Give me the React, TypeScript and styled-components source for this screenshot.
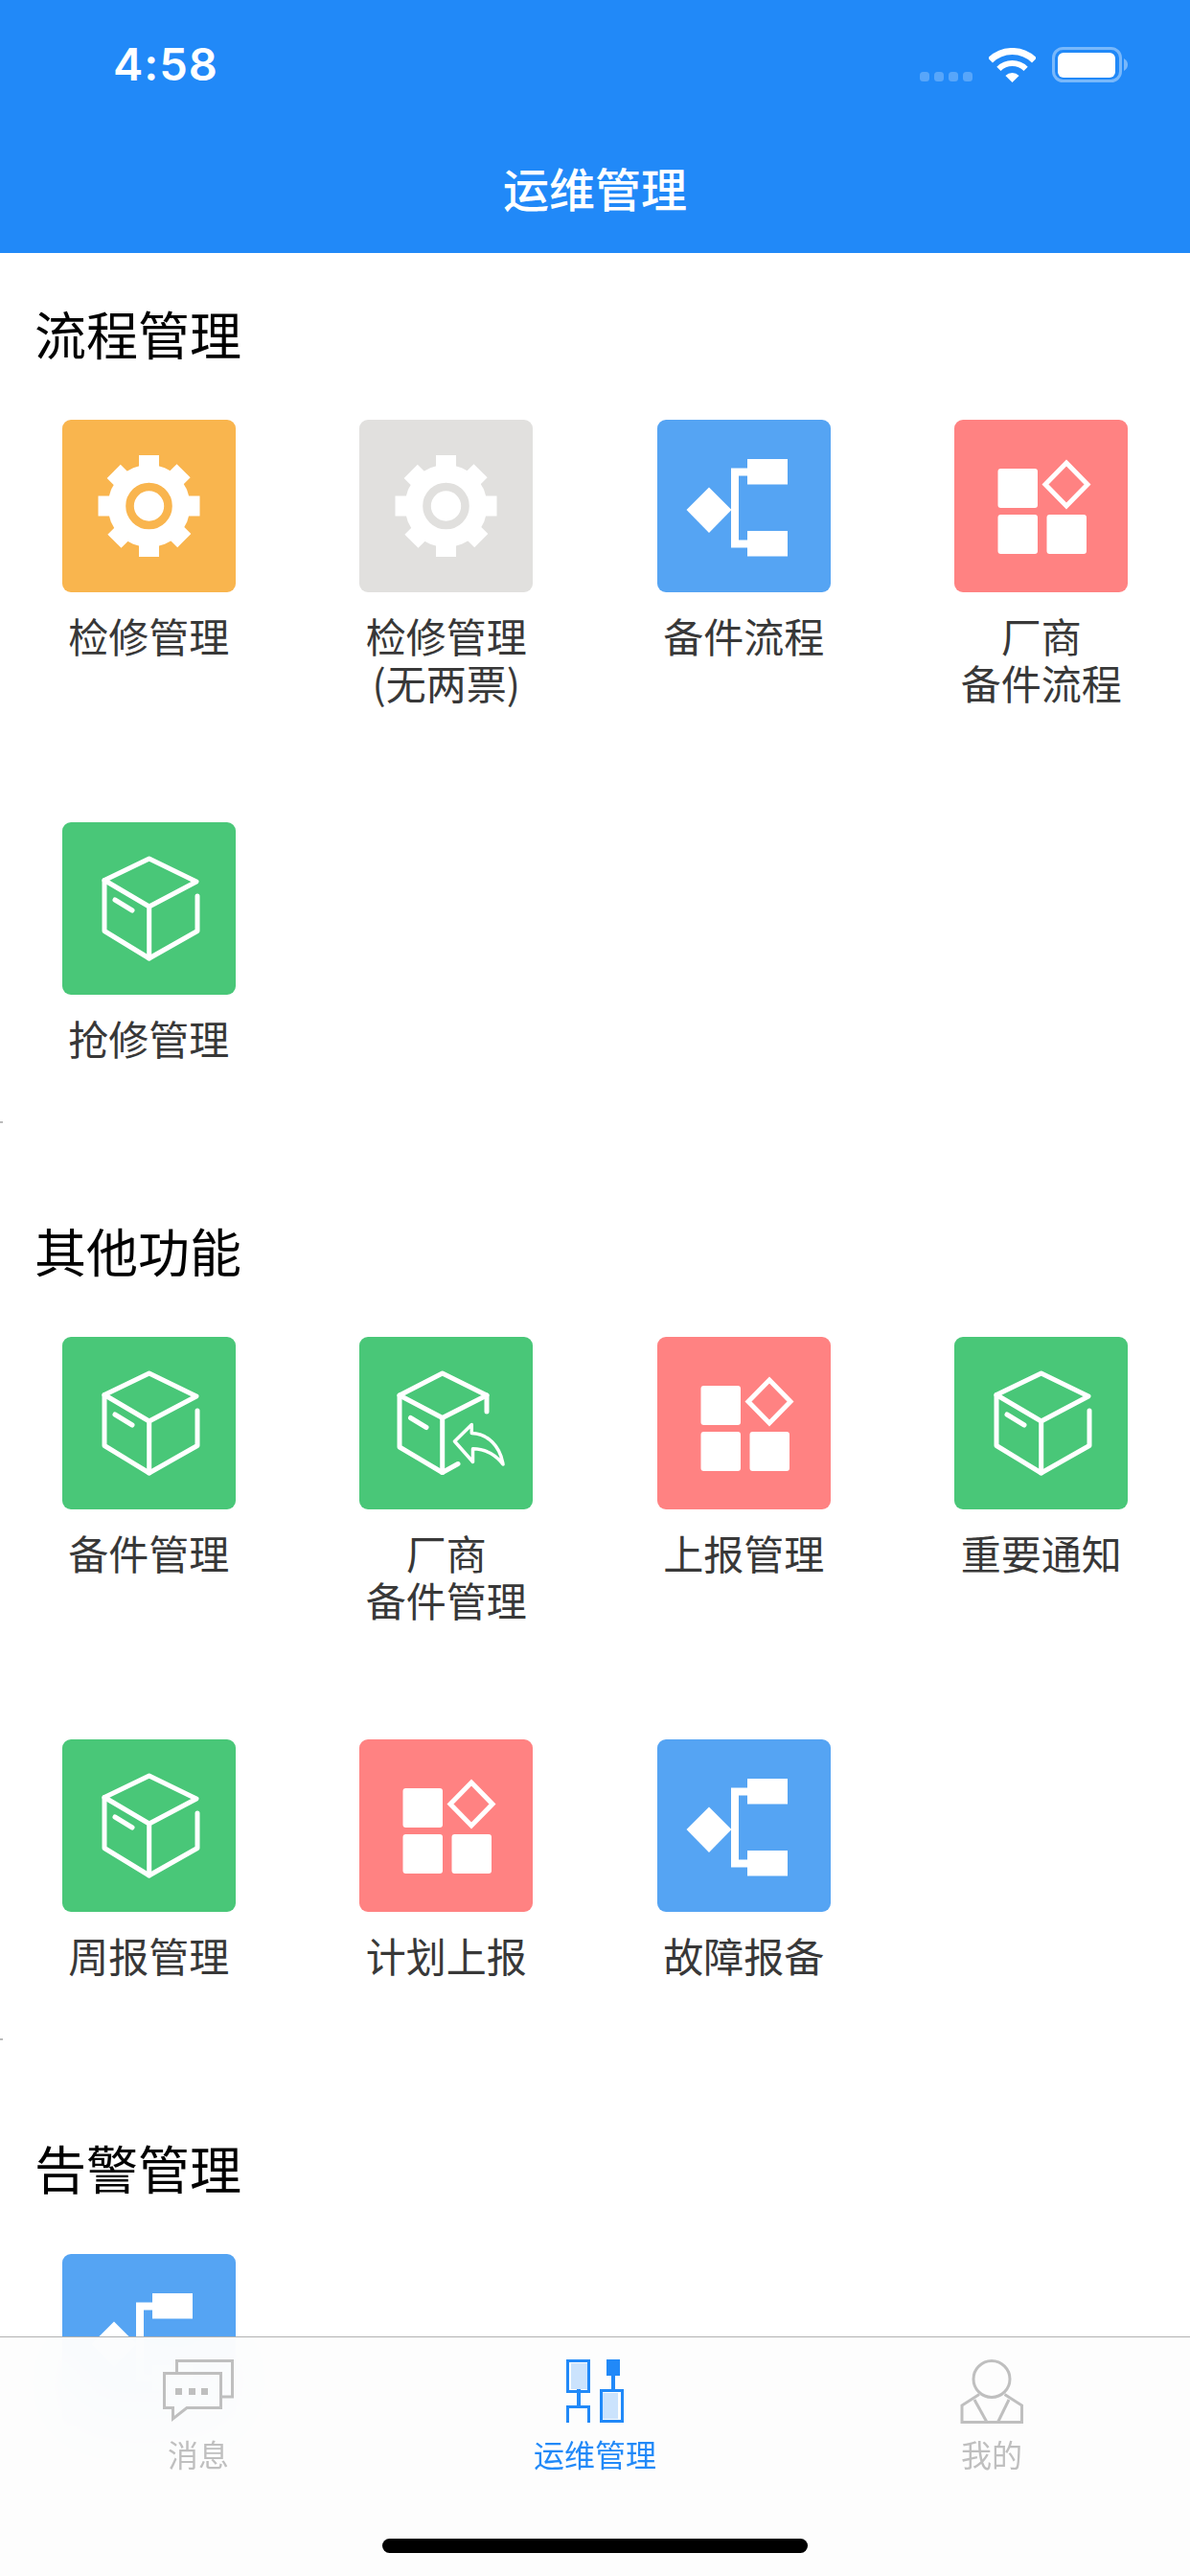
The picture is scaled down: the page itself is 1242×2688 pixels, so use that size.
import React from "react";
import styled, { createGlobalStyle } from "styled-components";

const FONT = `"Noto Sans CJK SC", "Noto Sans", sans-serif`;

const GlobalStyle = createGlobalStyle`
  html, body { margin: 0; padding: 0; background: #fff; }
  * { box-sizing: border-box; }
`;

const Page = styled.div`
  width: 1242px;
  height: 2688px;
  overflow: hidden;
  position: relative;
  background: #fff;
  font-family: ${FONT};
`;

const Header = styled.header`
  height: 264px;
  background: #2189f8;
  color: #fff;
  display: flex;
  flex-direction: column;
`;

const StatusBar = styled.div`
  height: 165px;
  padding: 39px 65px 0 118px;
  display: flex;
  justify-content: space-between;
  align-items: flex-start;
`;

const Clock = styled.span`
  font-family: Inter, "Liberation Sans", sans-serif;
  font-weight: 600;
  font-size: 47px;
  line-height: 56px;
  letter-spacing: 1px;
`;

const StatusIcons = styled.div`
  margin-top: 10px;
  display: flex;
  align-items: flex-end;
  gap: 17px;
`;

const SignalDots = styled.div`
  display: flex;
  gap: 5px;
  margin-bottom: 1px;
`;

const SignalDot = styled.span`
  width: 10px;
  height: 10px;
  border-radius: 3.5px;
  background: rgba(255, 255, 255, 0.25);
`;

const HeaderTitle = styled.h1`
  margin: 0;
  height: 66px;
  text-align: center;
  font-size: 48px;
  font-weight: 500;
  line-height: 60px;
`;

const Content = styled.main`
  padding-top: 57px;
`;

const SectionTitle = styled.h2`
  margin: 0 0 57px;
  padding-left: 36px;
  height: 60px;
  font-size: 54px;
  line-height: 54px;
  font-weight: 400;
  color: #000;
`;

const Grid = styled.div`
  position: relative;
  display: grid;
  grid-template-columns: repeat(4, 1fr);
  grid-auto-rows: 420px;
`;

const DividerStub = styled.span`
  position: absolute;
  left: 0;
  bottom: 106px;
  width: 3px;
  height: 2px;
  background: #bbb;
`;

const Cell = styled.div`
  display: flex;
  flex-direction: column;
  align-items: center;
`;

const Tile = styled.div<{ $color: string }>`
  width: 181px;
  height: 180px;
  flex: none;
  border-radius: 9px;
  background: ${(p) => p.$color};
  overflow: hidden;
`;

const TileSvg = styled.svg`
  display: block;
  width: 181px;
  height: 180px;
`;

const Label = styled.div`
  margin-top: 20px;
  font-size: 42px;
  line-height: 49px;
  color: #383838;
  text-align: center;
`;

const TabBar = styled.nav`
  position: fixed;
  left: 0;
  bottom: 0;
  width: 1242px;
  height: 250px;
  padding-top: 21px;
  display: flex;
  border-top: 1px solid rgba(0, 0, 0, 0.3);
  background: rgba(253, 253, 253, 0.97);
  backdrop-filter: blur(40px);
`;

const Tab = styled.div<{ $active?: boolean }>`
  flex: 1;
  display: flex;
  flex-direction: column;
  align-items: center;
  color: ${(p) => (p.$active ? "#2189f8" : "#bfbfbf")};
`;

const TabIconSlot = styled.svg`
  display: block;
  height: 70px;
  flex: none;
`;

const TabLabel = styled.span`
  margin-top: 10px;
  font-size: 32px;
  line-height: 40px;
`;

const HomeIndicator = styled.span`
  position: absolute;
  left: 399px;
  bottom: 24px;
  width: 444px;
  height: 15px;
  border-radius: 8px;
  background: #000;
`;

const COLORS = {
  orange: "#f9b54e",
  gray: "#e1e0de",
  blue: "#55a4f3",
  pink: "#ff8282",
  green: "#49c778",
};

type IconKind = "gear" | "flow" | "grid" | "box" | "boxReturn";

const GEAR_TEETH = [0, 45, 90, 135, 180, 225, 270, 315];

const TileIcon: React.FC<{ kind: IconKind; color: string }> = ({ kind, color }) => {
  if (kind === "gear") {
    return (
      <TileSvg viewBox="0 0 181 180">
        <g fill="#fff">
          {GEAR_TEETH.map((a) => (
            <rect key={a} x="80" y={a % 90 ? 38.5 : 37} width={a % 90 ? 20 : 21} height="30" transform={`rotate(${a} 90.5 90)`} />
          ))}
          <circle cx="90.5" cy="90" r="43" />
        </g>
        <circle cx="90.5" cy="90" r="20" fill="#fff" stroke={color} strokeWidth="8.6" />
      </TileSvg>
    );
  }
  if (kind === "flow") {
    return (
      <TileSvg viewBox="0 0 181 180">
        <g fill="#fff">
          <path d="M30.5 94 L54 70.5 L77.5 94 L54 118 Z" />
          <rect x="94" y="41" width="42" height="26.5" />
          <rect x="94" y="116" width="42" height="26.5" />
        </g>
        <path d="M96 54.5 H81 V129.5 H96" fill="none" stroke="#fff" strokeWidth="8" />
      </TileSvg>
    );
  }
  if (kind === "grid") {
    return (
      <TileSvg viewBox="0 0 181 180">
        <g fill="#fff">
          <rect x="45.5" y="51" width="41.5" height="41" rx="3" />
          <rect x="45.5" y="99" width="41.5" height="41" rx="3" />
          <rect x="96.5" y="99" width="41.5" height="41" rx="3" />
        </g>
        <path d="M117 45 L139 67.5 L117 90 L95 67.5 Z" fill="none" stroke="#fff" strokeWidth="5" />
      </TileSvg>
    );
  }
  if (kind === "box") {
    return (
      <TileSvg viewBox="0 0 181 180">
        <g fill="none" stroke="#fff" strokeWidth="5" strokeLinejoin="round" strokeLinecap="round">
          <path d="M44 60.5 L90.7 38 L140 62 L90.7 88 Z" />
          <path d="M44 60.5 V113.5 L90.7 142 L141 113.5 V77" />
          <path d="M90.7 88 V142" />
          <path d="M55 81 L73 92" />
        </g>
      </TileSvg>
    );
  }
  return (
    <TileSvg viewBox="0 0 181 180">
      <g fill="none" stroke="#fff" strokeWidth="5" strokeLinejoin="round" strokeLinecap="round">
        <path d="M42 61 L86.7 38 L133 61 L86.7 84.5 Z" />
        <path d="M42 61 V115 L86.7 141.5 L103 132.5" />
        <path d="M133 61 V78" />
        <path d="M86.7 84.5 V141.5" />
        <path d="M53.5 84.5 L70 94.5" />
      </g>
      <path
        d="M99.5 109 L117.3 91.5 V100.5 C134 101 147 114 150 133 C141 121 130 117 118.5 116.7 V130.5 Z"
        fill="none"
        stroke="#fff"
        strokeWidth="3.5"
        strokeLinejoin="round"
      />
    </TileSvg>
  );
};

type Item = { label?: React.ReactNode; color: string; icon: IconKind };
type SectionData = { title: string; items: Item[]; stub?: boolean };

const SECTIONS: SectionData[] = [
  {
    title: "流程管理",
    stub: true,
    items: [
      { label: "检修管理", color: COLORS.orange, icon: "gear" },
      { label: <>检修管理<br />(无两票)</>, color: COLORS.gray, icon: "gear" },
      { label: "备件流程", color: COLORS.blue, icon: "flow" },
      { label: <>厂商<br />备件流程</>, color: COLORS.pink, icon: "grid" },
      { label: "抢修管理", color: COLORS.green, icon: "box" },
    ],
  },
  {
    title: "其他功能",
    stub: true,
    items: [
      { label: "备件管理", color: COLORS.green, icon: "box" },
      { label: <>厂商<br />备件管理</>, color: COLORS.green, icon: "boxReturn" },
      { label: "上报管理", color: COLORS.pink, icon: "grid" },
      { label: "重要通知", color: COLORS.green, icon: "box" },
      { label: "周报管理", color: COLORS.green, icon: "box" },
      { label: "计划上报", color: COLORS.pink, icon: "grid" },
      { label: "故障报备", color: COLORS.blue, icon: "flow" },
    ],
  },
  {
    title: "告警管理",
    items: [{ color: COLORS.blue, icon: "flow" }],
  },
];

const Wifi = () => (
  <svg width="49" height="36" viewBox="0 0 49 36" style={{ display: "block" }}>
    <g fill="none" stroke="#fff">
      <path d="M1.5 13 A32.5 32.5 0 0 1 47.5 13" strokeWidth="7" />
      <path d="M10.4 21.9 A20 20 0 0 1 38.6 21.9" strokeWidth="6" />
    </g>
    <path d="M24.5 36 L17.4 28.9 A10 10 0 0 1 31.6 28.9 Z" fill="#fff" />
  </svg>
);

const Battery = () => (
  <svg width="79" height="37" viewBox="0 0 79 37" style={{ display: "block" }}>
    <rect x="1.5" y="1.5" width="70" height="34" rx="10" fill="none" stroke="#fff" strokeOpacity="0.4" strokeWidth="3" />
    <rect x="6" y="6" width="60" height="26" rx="6" fill="#fff" />
    <path d="M75 12 C78 14 79 16 79 18.5 C79 21 78 23 75 25 Z" fill="#fff" fillOpacity="0.4" />
  </svg>
);

const ChatIcon = () => (
  <TabIconSlot viewBox="0 0 80 70" width="80">
    <g fill="none" stroke="currentColor" strokeWidth="3">
      <path d="M17.5 15 V3.5 H75.5 V41 H65" />
      <path d="M4.5 16.5 H63.5 V52.5 H28 L13.5 64 V52.5 H4.5 Z" />
    </g>
    <g fill="currentColor">
      <rect x="16" y="32" width="7" height="7" />
      <rect x="30" y="32" width="7" height="7" />
      <rect x="43" y="32" width="7" height="7" />
    </g>
  </TabIconSlot>
);

const OpsIcon = () => (
  <TabIconSlot viewBox="0 0 62 70" width="62">
    <g fill="#cbe3fd">
      <rect x="6" y="6" width="17" height="27" />
      <rect x="39" y="37" width="16" height="27" />
    </g>
    <g fill="none" stroke="currentColor" strokeWidth="3">
      <rect x="2.5" y="3.5" width="22" height="32" />
      <rect x="37.5" y="34.5" width="22" height="32" />
      <path d="M2.5 68 V51.5 H24.5 V68" />
    </g>
    <g fill="currentColor">
      <rect x="12" y="33" width="4" height="17" />
      <rect x="43" y="2" width="14" height="17" />
      <rect x="48" y="18" width="4" height="16" />
    </g>
  </TabIconSlot>
);

const PersonIcon = () => (
  <TabIconSlot viewBox="0 0 70 70" width="70">
    <g fill="none" stroke="currentColor" strokeWidth="3">
      <circle cx="35" cy="22.5" r="19" />
      <path d="M22 38.5 L4 50 V67.5 H66.5 V50 L48.5 38.5" />
      <path d="M17 44 L30 67.5" />
      <path d="M53 44 L41.5 67.5" />
    </g>
  </TabIconSlot>
);

export default function App() {
  return (
    <Page>
      <GlobalStyle />
      <Header>
        <StatusBar>
          <Clock>4:58</Clock>
          <StatusIcons>
            <SignalDots>
              <SignalDot />
              <SignalDot />
              <SignalDot />
              <SignalDot />
            </SignalDots>
            <Wifi />
            <Battery />
          </StatusIcons>
        </StatusBar>
        <HeaderTitle>运维管理</HeaderTitle>
      </Header>
      <Content>
        {SECTIONS.map((section) => (
          <section key={section.title}>
            <SectionTitle>{section.title}</SectionTitle>
            <Grid>
              {section.items.map((item, i) => (
                <Cell key={i}>
                  <Tile $color={item.color}>
                    <TileIcon kind={item.icon} color={item.color} />
                  </Tile>
                  {item.label && <Label>{item.label}</Label>}
                </Cell>
              ))}
              {section.stub && <DividerStub />}
            </Grid>
          </section>
        ))}
      </Content>
      <TabBar>
        <Tab>
          <ChatIcon />
          <TabLabel>消息</TabLabel>
        </Tab>
        <Tab $active>
          <OpsIcon />
          <TabLabel>运维管理</TabLabel>
        </Tab>
        <Tab>
          <PersonIcon />
          <TabLabel>我的</TabLabel>
        </Tab>
        <HomeIndicator />
      </TabBar>
    </Page>
  );
}
